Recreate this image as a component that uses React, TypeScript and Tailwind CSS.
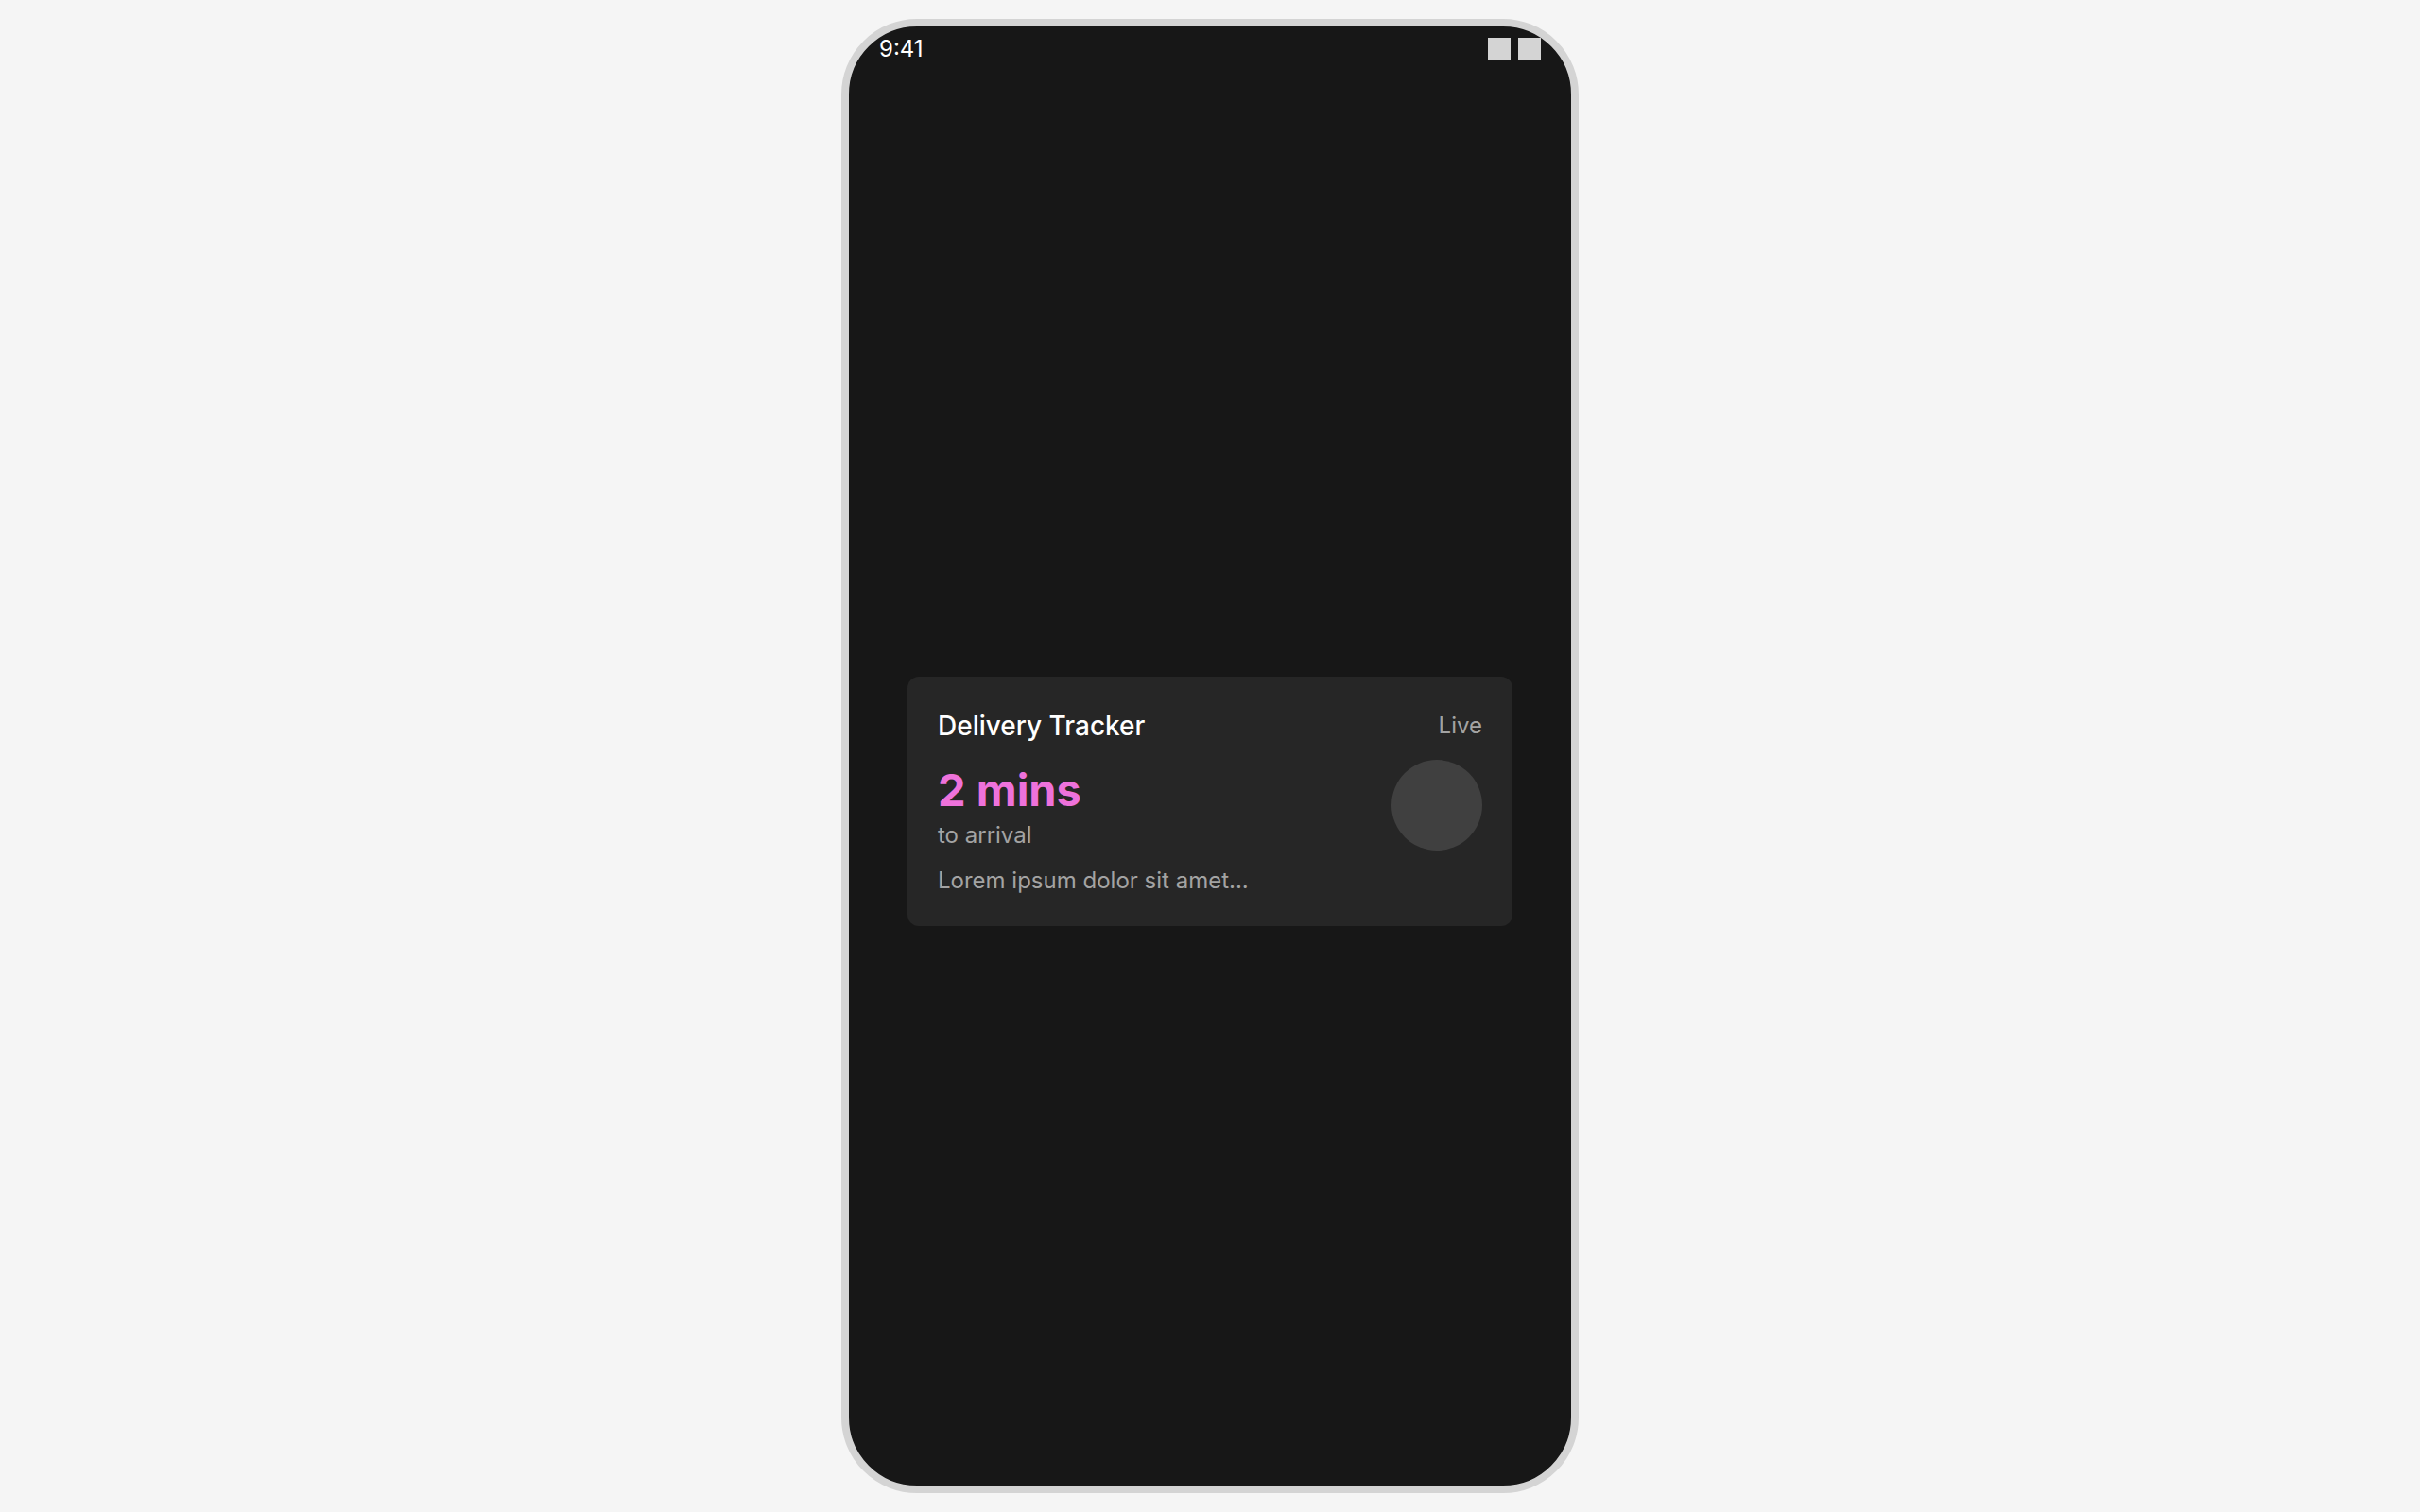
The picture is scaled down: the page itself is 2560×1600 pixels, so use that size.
export default function App() {
  return (
    <div className="flex min-h-screen justify-center bg-[#f5f5f5] p-5 font-['Inter',sans-serif]">
      <div className="flex w-full max-w-[780px] flex-col overflow-hidden rounded-[80px] border-8 border-[#d4d4d4] bg-[#171717]">
        <header className="flex h-12 items-center justify-between px-8">
          <time className="text-2xl text-white">9:41</time>
          <div className="flex gap-2" aria-hidden="true">
            <span className="size-6 bg-[#d4d4d4]" />
            <span className="size-6 bg-[#d4d4d4]" />
          </div>
        </header>
        <main className="flex flex-1 items-center justify-center px-8 pt-12">
          <section className="flex w-full max-w-[640px] flex-col gap-4 rounded-xl bg-[#262626] p-8">
            <div className="flex items-center justify-between">
              <h1 className="text-[28px] leading-10 font-medium text-white">Delivery Tracker</h1>
              <span className="text-2xl text-[#a3a3a3]">Live</span>
            </div>
            <div className="flex items-center justify-between">
              <div>
                <p className="text-[47px] leading-16 font-bold text-[#ee72db]">2 mins</p>
                <p className="text-2xl text-[#a3a3a3]">to arrival</p>
              </div>
              <div className="size-24 rounded-full bg-[#404040]" />
            </div>
            <p className="text-2xl text-[#a3a3a3]">Lorem ipsum dolor sit amet...</p>
          </section>
        </main>
      </div>
    </div>
  );
}
